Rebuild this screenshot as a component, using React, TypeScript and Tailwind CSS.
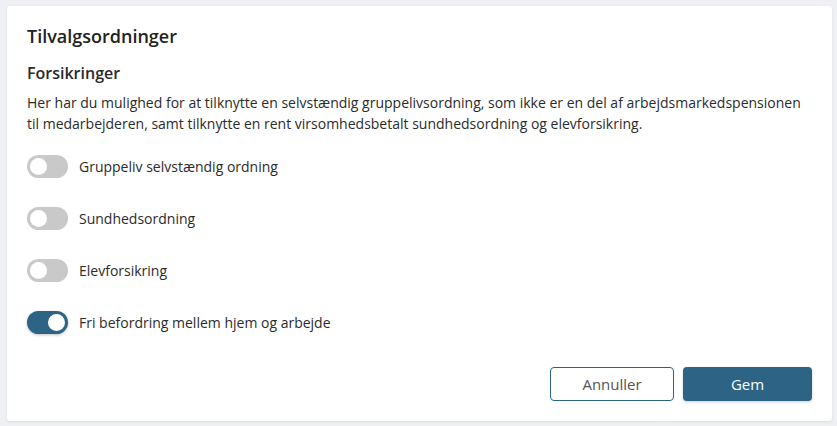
import { useState } from 'react';

type Option = { id: string; label: string; on: boolean };

const initial: Option[] = [
    { id: 'gruppeliv', label: 'Gruppeliv selvstændig ordning', on: false },
    { id: 'sundhed', label: 'Sundhedsordning', on: false },
    { id: 'elev', label: 'Elevforsikring', on: false },
    { id: 'befordring', label: 'Fri befordring mellem hjem og arbejde', on: true },
];

function Toggle({ on, onChange }: { on: boolean; onChange: () => void }) {
    return (
        <button
            type="button"
            role="switch"
            aria-checked={on}
            onClick={onChange}
            className={`relative h-[23px] w-[41px] shrink-0 rounded-full transition-colors ${
                on ? 'bg-[#2d6385] shadow-[0_1px_3px_rgba(0,0,0,0.25)]' : 'bg-[#c9c9c9]'
            }`}
        >
            <span
                className={`absolute top-[3px] h-[17px] w-[17px] rounded-full bg-white transition-all ${
                    on ? 'left-[21px]' : 'left-[3px]'
                }`}
            />
        </button>
    );
}

export default function App() {
    const [options, setOptions] = useState(initial);

    const flip = (id: string) =>
        setOptions((prev) => prev.map((o) => (o.id === id ? { ...o, on: !o.on } : o)));

    return (
        <div className="min-h-screen bg-[#eef0f4] px-[7px] pt-[6px] font-['Open_Sans',sans-serif] text-[#262626]">
            <div className="w-[825px] rounded-[3px] bg-white px-5 pt-[18px] pb-5 shadow-[0_1px_3px_rgba(0,0,0,0.08)]">
                <h1 className="text-[18px] leading-[25px] font-semibold text-[#222]">Tilvalgsordninger</h1>

                <h2 className="mt-[13px] text-[16px] leading-[22px] font-semibold text-[#2a2a2a]">Forsikringer</h2>
                <p className="mt-2 text-[14px] leading-[21px] text-[#2b2b2b]">
                    Her har du mulighed for at tilknytte en selvstændig gruppelivsordning, som ikke er en del af arbejdsmarkedspensionen
                    til medarbejderen, samt tilknytte en rent virsomhedsbetalt sundhedsordning og elevforsikring.
                </p>

                {/* Options */}
                <div className="mt-[21px] flex flex-col gap-[29px]">
                    {options.map((o) => (
                        <div key={o.id} className="flex h-[23px] items-center gap-[11px]">
                            <Toggle on={o.on} onChange={() => flip(o.id)} />
                            <span className="text-[14px] text-[#2b2b2b]">{o.label}</span>
                        </div>
                    ))}
                </div>

                <div className="mt-[33px] flex justify-end gap-[9px]">
                    <button className="h-[34px] w-[124px] rounded-[4px] border border-[#2d6385] bg-white text-[15px] text-[#555]">
                        Annuller
                    </button>
                    <button className="h-[34px] w-[129px] rounded-[4px] bg-[#2d6385] text-[15px] font-medium text-white shadow-[0_1px_3px_rgba(0,0,0,0.2)]">
                        Gem
                    </button>
                </div>
            </div>
        </div>
    );
}
